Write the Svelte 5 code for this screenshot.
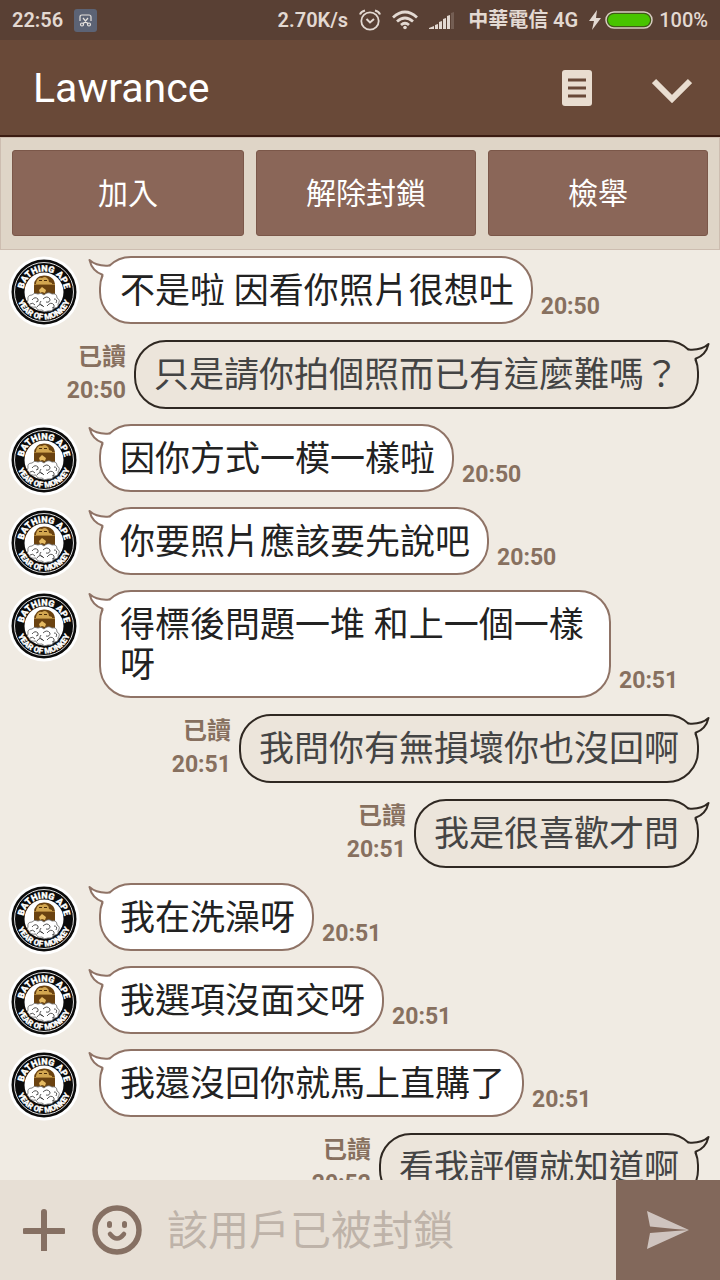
<script>
	let draft = $state('');

	const actions = ['加入', '解除封鎖', '檢舉'];

	const messages = [
		{ text: '不是啦 因看你照片很想吐', time: '20:50' },
		{ text: '只是請你拍個照而已有這麼難嗎？', time: '20:50', mine: true },
		{ text: '因你方式一模一樣啦', time: '20:50' },
		{ text: '你要照片應該要先說吧', time: '20:50' },
		{ text: '得標後問題一堆 和上一個一樣呀', time: '20:51' },
		{ text: '我問你有無損壞你也沒回啊', time: '20:51', mine: true },
		{ text: '我是很喜歡才問', time: '20:51', mine: true },
		{ text: '我在洗澡呀', time: '20:51' },
		{ text: '我選項沒面交呀', time: '20:51' },
		{ text: '我還沒回你就馬上直購了', time: '20:51' },
		{ text: '看我評價就知道啊', time: '20:52', mine: true }
	];
</script>

{#snippet avatar(id)}
	<svg class="avatar" viewBox="0 -2 68 68" aria-hidden="true">
		<circle cx="34" cy="34" r="35.5" fill="#fff" />
		<circle cx="34" cy="34" r="32.5" fill="#0b0b0b" />
		<circle cx="34" cy="34" r="29.5" fill="none" stroke="#ddd" stroke-width="1" />
		<circle cx="34" cy="34" r="19.5" fill="#fff" />
		<path id="top{id}" d="M13.500 34a20.500 20.500 0 0 1 41 0" fill="none" />
		<path id="low{id}" d="M6.500 34a27.500 27.500 0 0 0 55 0" fill="none" />
		<text class="badge"><textPath href="#top{id}" startOffset="50%">BATHING APE</textPath></text>
		<text class="badge low"><textPath href="#low{id}" startOffset="50%">YEAR OF MONKEY</textPath></text>
		<!-- ape head -->
		<path d="M24 39V28Q24 18 34 17.500Q45 18 45 28V39q-10 4-21 0z" fill="#6a4210" />
		<path d="M27 22q2-3 5-2q3-2 5 0q2 1 2 4l3 1v1H26v-1z" fill="#d2a650" />
		<path d="M29 22.500h3M34 22.500h3" stroke="#4a2b08" stroke-width="1" />
		<path d="M24 26.500h21" stroke="#b98b3c" stroke-width="0.800" />
		<path d="M29 32l3-3l4 3l-1 3l-3-1l-2 1z" fill="#e6bb62" />
		<!-- beard of clouds -->
		<path
			d="M18 42q-1-5 4-5q2-3 6-1q3-2 6 1q4-4 8-1q5-1 5 4q4 2 1 6q1 4-4 4q-2 4-6 3q-4 2-6-1q-5 1-6-3q-6 1-7-3q-3-2-1-4z"
			fill="#fff"
			stroke="#666"
			stroke-width="0.800"
		/>
		<path
			d="M22 42q3-4 6-1q1 3-2 3M33 41q4-4 7 0q0 4-4 3M27 49q3-5 7 0M37 48q4-5 7-1q1 3-2 3M20 46q3-2 5 1M31 43q-3 4 2 5M44 41q4 0 2 4"
			fill="none"
			stroke="#444"
			stroke-width="0.900"
		/>
	</svg>
{/snippet}

{#snippet tail()}
	<svg class="tail" viewBox="0 0 40 30" aria-hidden="true">
		<path class="tail-fill" d="M1.500 4Q8 10 21 9.700L25 14L19 23L14.600 19Q4 15 1.500 4z" />
		<path class="tail-line" d="M22 9.200Q21 9.800 19 9.700Q8 10 1.500 4Q4 15 14.500 18.800L14 21" />
	</svg>
{/snippet}

<div class="screen">
	<div class="status">
		<span>22:56</span>
		<svg class="shot" width="23" height="23" viewBox="0 0 23 23">
			<rect width="23" height="23" rx="3" fill="#5c6375" />
			<g fill="none" stroke="#e6e2de" stroke-width="1.200">
				<path d="M6 12V8q0-2 2-2h7q2 0 2 2v4M9 9l5 6M14 9l-5 6" />
				<circle cx="8" cy="15.500" r="1.500" />
				<circle cx="15" cy="15.500" r="1.500" />
			</g>
		</svg>
		<span class="speed">2.70K/s</span>
		<svg width="22" height="22" viewBox="0 0 22 22" fill="none" stroke="#e3d9d2">
			<circle cx="11" cy="12" r="8.700" stroke-width="1.800" />
			<path d="M7.500 10l3.500 3.500l4-3.500" stroke-width="2" />
			<path d="M1 5.500q1-3 5-4M21 5.500q-1-3-5-4" stroke-width="2" />
		</svg>
		<svg width="26" height="20" viewBox="0 0 26 20" fill="none" stroke="#e3d9d2" stroke-width="2.800">
			<path d="M1 7.500q12-11 24 0M5 11.500q8-7 16 0M9 15q4-3.500 8 0" />
			<circle cx="13" cy="17.500" r="1.800" fill="#e3d9d2" stroke="none" />
		</svg>
		<svg width="25" height="17" viewBox="0 0 25 17" fill="#e3d9d2">
			<path d="M0 17v-1l5-2v3zM6 13l3-1v5H6zM10 10l3-1v8h-3zM14 7l3-1v11h-3zM18 4l3-1v14h-3z" />
			<path d="M22 1l3-1v17h-3z" opacity="0.2" />
		</svg>
		<span class="carrier">中華電信 4G</span>
		<svg width="12" height="20" viewBox="0 0 12 20"><path d="M8 0L0 11h5L3 20l9-12H7z" fill="#e3d9d2" /></svg>
		<svg class="battery" width="48" height="18" viewBox="0 0 48 18">
			<rect x="1" y="1" width="46" height="16" rx="8" fill="#3f5a16" stroke="#d8ccc2" stroke-width="1.500" />
			<rect x="3" y="3" width="42" height="12" rx="6" fill="#48c400" />
		</svg>
		<span class="level">100%</span>
	</div>

	<header>
		<h1>Lawrance</h1>
		<button class="icon" aria-label="筆記">
			<svg width="30" height="36" viewBox="0 0 30 36">
				<rect width="30" height="36" rx="3" fill="#e9ddd0" />
				<path d="M6 10h18M6 18h18M6 26h18" stroke="#694938" stroke-width="3" />
			</svg>
		</button>
		<button class="icon" aria-label="展開">
			<svg width="40" height="30" viewBox="0 0 40 30">
				<path d="M2 8l18 18L38 8" fill="none" stroke="#e9ddd0" stroke-width="6" />
			</svg>
		</button>
	</header>

	<div class="actions">
		{#each actions as action}
			<button>{action}</button>
		{/each}
	</div>

	<main>
		{#each messages as message, i}
			<div class="row" class:mine={message.mine}>
				{#if message.mine}
					<div class="meta">
						<span>已讀</span>
						<time>{message.time}</time>
					</div>
					<div class="bubble">{message.text}{@render tail()}</div>
				{:else}
					{@render avatar(i)}
					<div class="bubble">{message.text}{@render tail()}</div>
					<div class="meta"><time>{message.time}</time></div>
				{/if}
			</div>
		{/each}
	</main>

	<footer>
		<button class="tool" aria-label="新增">
			<svg width="42" height="42" viewBox="0 0 42 42">
				<path d="M2 22h38M21 3v38" stroke="#867063" stroke-width="6" stroke-linecap="round" />
			</svg>
		</button>
		<button class="tool" aria-label="表情">
			<svg width="50" height="50" viewBox="0 0 50 50" fill="none" stroke="#867063" stroke-linecap="round">
				<circle cx="25" cy="25" r="22" stroke-width="5.500" />
				<path d="M17.500 18.500v2M32.500 18.500v2" stroke-width="5" />
				<path d="M18 29q7 9 14 0" stroke-width="4.500" />
			</svg>
		</button>
		<input type="text" aria-label="訊息" placeholder="該用戶已被封鎖" bind:value={draft} />
		<button class="send" aria-label="傳送">
			<svg width="42" height="38" viewBox="0 0 42 38" fill="#cfc4bf">
				<path d="M0 0l42 19l-14-1L3 15.500zM0 38l42-19l-14 1L3 22z" />
			</svg>
		</button>
	</footer>
</div>

<style>
	:global(body) {
		margin: 0;
	}

	.screen {
		display: flex;
		flex-direction: column;
		height: 100vh;
		background: #f0ebe3;
		font-family: Roboto, 'Noto Sans CJK TC', sans-serif;
	}

	button {
		padding: 0;
		border: none;
		background: none;
		font-family: inherit;
		cursor: pointer;
	}

	svg {
		display: block;
		flex: none;
	}

	.status {
		display: flex;
		align-items: center;
		gap: 11px;
		height: 40px;
		padding: 0 12px;
		background: #594034;
		color: #e3d9d2;
		font-size: 20px;
		font-weight: 600;
		line-height: 40px;
		white-space: nowrap;
	}

	.speed {
		margin-left: auto;
	}

	.carrier {
		margin-left: 3px;
	}

	.battery {
		margin: 0 -5px 0 -7px;
	}

	.level {
		font-weight: 500;
	}

	header {
		display: flex;
		align-items: center;
		height: 95px;
		padding: 0 28px 0 33px;
		background: #694938;
		border-bottom: 2px solid #3b1d12;
	}

	h1 {
		flex: 1;
		margin: 0;
		color: #fff;
		font-size: 41px;
		font-weight: 400;
	}

	.icon + .icon {
		margin-left: 60px;
	}

	.actions {
		display: grid;
		grid-template-columns: 232fr 220fr 220fr;
		gap: 12px;
		padding: 12px 11px 13px;
		background: #dfd5c7;
		border: 1px solid #cdbdb0;
	}

	.actions button {
		height: 86px;
		padding-bottom: 5px;
		background: #8a6658;
		border: 1px solid #7b5749;
		border-radius: 3px;
		color: #fff;
		font-size: 30px;
	}

	main {
		display: flex;
		flex: 1;
		flex-direction: column;
		gap: 15px;
		min-height: 0;
		padding: 6px 21px 0 10px;
		overflow: hidden;
	}

	.row {
		display: flex;
		flex: none;
		gap: 8px;
	}

	.row.mine {
		justify-content: flex-end;
		padding-top: 1px;
	}

	.avatar {
		width: 68px;
		height: 68px;
		margin-right: 13px;
		overflow: visible;
	}

	.badge {
		fill: #fff;
		stroke: #fff;
		stroke-width: 0.3px;
		font-size: 9px;
		font-weight: 900;
		text-anchor: middle;
	}

	.badge.low {
		font-size: 8px;
	}

	.bubble {
		position: relative;
		box-sizing: border-box;
		max-width: 512px;
		padding: 14px 17px 10px 19px;
		background: #fff;
		border: 2px solid #8f7366;
		border-radius: 32px;
		color: #222;
		font-size: 35px;
		line-height: 40px;
	}

	.mine .bubble {
		max-width: none;
		padding: 14px 18px 11px;
		background: #ece5db;
		border-color: #2f2822;
		color: #444;
	}

	.tail {
		position: absolute;
		top: -2px;
		left: -13px;
		width: 40px;
		height: 30px;
	}

	.mine .tail {
		right: -13px;
		left: auto;
		transform: scaleX(-1);
	}

	.tail-fill {
		fill: #fff;
	}

	.mine .tail-fill {
		fill: #ece5db;
	}

	.tail-line {
		fill: none;
		stroke: #8f7366;
		stroke-width: 2;
		stroke-linejoin: round;
	}

	.mine .tail-line {
		stroke: #2f2822;
	}

	.meta {
		display: flex;
		flex-direction: column;
		justify-content: flex-end;
		padding-bottom: 1px;
		color: #87705f;
		font-size: 24px;
		font-weight: 600;
		line-height: 33px;
	}

	.meta time {
		font-size: 23px;
		font-weight: 700;
	}

	.mine .meta {
		align-items: flex-end;
		justify-content: flex-start;
		padding-top: 1px;
	}

	footer {
		display: flex;
		align-items: center;
		height: 100px;
		padding-left: 23px;
		background: #e7dfd5;
	}

	.tool + .tool {
		margin-left: 27px;
	}

	input {
		flex: 1;
		min-width: 0;
		margin-left: 25px;
		padding: 2px 0 0;
		border: none;
		outline: none;
		background: none;
		color: #444;
		font-family: inherit;
		font-size: 41px;
	}

	input::placeholder {
		color: #beb3a9;
	}

	.send {
		display: flex;
		align-items: center;
		justify-content: center;
		width: 104px;
		height: 100px;
		background: #82685b;
	}
</style>
